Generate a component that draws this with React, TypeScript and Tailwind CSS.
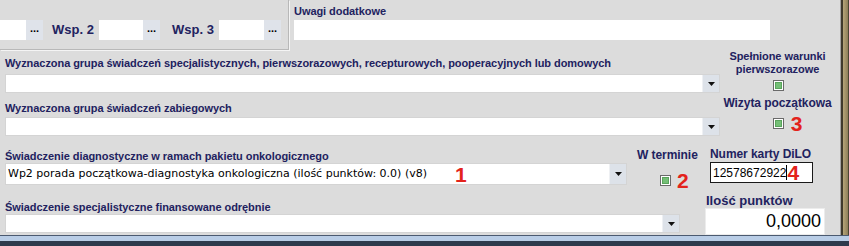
import React from 'react';

const lbl = "font-['Liberation_Sans',Arial,sans-serif] font-bold text-[11px] leading-[13px] text-[#22225f] tracking-[-0.06px] whitespace-nowrap";

function Arrow() {
  return (
    <svg width="7" height="4" viewBox="0 0 7 4">
      <path d="M0 0H7L3.5 4Z" fill="#111" />
    </svg>
  );
}

function Combo({ width, height = 19, text }: { width: number; height?: number; text?: string }) {
  return (
    <div
      className="flex bg-white border border-[#d4d4d4]"
      style={{ width, height }}
    >
      <div className="flex-1 flex items-center pl-[2px] font-['DejaVu_Sans',sans-serif] text-[11px] text-black whitespace-nowrap overflow-hidden">
        {text}
      </div>
      <div className="w-[17px] flex items-center justify-center bg-[#dde2e9] border-l border-[#eef0f3]">
        <Arrow />
      </div>
    </div>
  );
}

function DotsInput({ width }: { width: number }) {
  return (
    <div className="flex h-[20px] bg-white" style={{ width }}>
      <div className="flex-1" />
      <div className="w-[17px] flex items-center justify-center bg-[#dfe3ea] font-['Liberation_Sans',Arial,sans-serif] font-bold text-[11px] leading-none pb-[2px] text-black">
        ...
      </div>
    </div>
  );
}

function Check() {
  return (
    <div className="w-[11px] h-[11px] border border-[#6a6a6a] bg-white p-[1px]">
      <div className="w-full h-full bg-[#74bf76] border border-[#5aa35c]" />
    </div>
  );
}

function Num({ n }: { n: string }) {
  return (
    <span className="font-['Liberation_Sans',Arial,sans-serif] font-bold text-[21px] leading-none text-[#e3231b]">
      {n}
    </span>
  );
}

export default function App() {
  return (
    <div className="w-[849px] h-[246px] bg-[#dcdcdc] flex flex-col overflow-hidden">
      <div className="flex h-[235px]">
        <div className="w-[840px] flex flex-col">
          {/* top row */}
          <div className="flex h-[50px]">
            <div className="w-[289px] h-[50px] border-r border-b border-[#b8b8b8] shadow-[1px_1px_0_#f4f4f4] flex items-center pt-[10px]">
              <DotsInput width={43} />
              <span className={`${lbl} text-[13px] ml-[9px] w-[47px] tracking-normal`}>Wsp. 2</span>
              <DotsInput width={61} />
              <span className={`${lbl} text-[13px] ml-[12px] w-[47px] tracking-normal`}>Wsp. 3</span>
              <DotsInput width={62} />
            </div>
            <div className="ml-[5px] pt-[5px] flex flex-col">
              <span className={`${lbl} tracking-[-0.3px]`}>Uwagi dodatkowe</span>
              <div className="mt-[2px] w-[476px] h-[20px] bg-white" />
            </div>
          </div>

          {/* row 1 */}
          <div className="flex h-[45px]">
            <div className="ml-[5px] w-[720px] pt-[7px] flex flex-col">
              <span className={lbl}>
                Wyznaczona grupa świadczeń specjalistycznych, pierwszorazowych, recepturowych, pooperacyjnych lub domowych
              </span>
              <div className="mt-[4px]">
                <Combo width={715} />
              </div>
            </div>
            <div className="w-[105px] flex flex-col items-center">
              <span className={`${lbl} leading-[12px]`}>Spełnione warunki</span>
              <span className={`${lbl} leading-[12px]`}>pierwszorazowe</span>
              <div className="mt-[4px] ml-[1px]">
                <Check />
              </div>
            </div>
          </div>

          {/* row 2 */}
          <div className="flex h-[45px]">
            <div className="ml-[5px] w-[720px] pt-[7px] flex flex-col">
              <span className={lbl}>Wyznaczona grupa świadczeń zabiegowych</span>
              <div className="mt-[2px]">
                <Combo width={715} />
              </div>
            </div>
            <div className="w-[105px] flex flex-col items-center pt-[2px]">
              <span className={`${lbl} text-[12px] leading-[12px]`}>Wizyta początkowa</span>
              <div className="mt-[3px] ml-[20px] flex items-center gap-[7px]">
                <Check />
                <Num n="3" />
              </div>
            </div>
          </div>

          {/* row 3 */}
          <div className="flex h-[50px]">
            <div className="ml-[5px] w-[632px] pt-[10px] flex flex-col">
              <span className={lbl}>Świadczenie diagnostyczne w ramach pakietu onkologicznego</span>
              <div className="relative">
                <Combo
                  width={622}
                  height={22}
                  text="Wp2 porada początkowa-diagnostyka onkologiczna (ilość punktów: 0.0) (v8)"
                />
                <span className="absolute left-[450px] top-[1px]">
                  <Num n="1" />
                </span>
              </div>
            </div>
            <div className="w-[73px] pt-[9px] flex flex-col">
              <span className={`${lbl} text-[12px]`}>W terminie</span>
              <div className="mt-[8px] ml-[23px] flex items-center gap-[6px]">
                <Check />
                <Num n="2" />
              </div>
            </div>
            <div className="pt-[8px] flex flex-col">
              <span className={`${lbl} text-[12px]`}>Numer karty DiLO</span>
              <div className="mt-[1px] w-[103px] h-[21px] bg-white border border-[#1a1a1a] flex items-center pl-[2px] font-['Liberation_Sans',Arial,sans-serif] text-[12px] text-black">
                <span>12578672922</span>
                <span className="w-px h-[15px] bg-black" />
                <Num n="4" />
              </div>
            </div>
          </div>

          {/* row 4 */}
          <div className="flex h-[45px]">
            <div className="ml-[5px] w-[700px] pt-[11px] flex flex-col">
              <span className={lbl}>Świadczenie specjalistyczne finansowane odrębnie</span>
              <div>
                <Combo width={675} />
              </div>
            </div>
            <div className="pt-[4px] flex flex-col">
              <span className={`${lbl} text-[13px] leading-[14px] tracking-normal ml-[1px]`}>Ilość punktów</span>
              <div className="w-[120px] h-[27px] bg-white border border-[#ececec] flex items-center justify-end pr-[3px] font-['Liberation_Sans',Arial,sans-serif] text-[18px] text-black">
                0,0000
              </div>
            </div>
          </div>
        </div>

        {/* right window frame */}
        <div className="flex-1 flex">
          <div className="w-px bg-[#a3a3a3]" />
          <div className="w-[2px] bg-[#3f3a2c]" />
          <div className="flex-1 bg-gradient-to-r from-[#b6a57a] to-[#8d7f58]" />
          <div className="w-px bg-[#4a4534]" />
        </div>
      </div>

      {/* bottom window frame */}
      <div className="flex-1 flex flex-col">
        <div className="h-px bg-[#4b5a70]" />
        <div className="h-[5px] bg-[#b9cde6]" />
        <div className="flex-1 bg-[#2e3a4c]" />
      </div>
    </div>
  );
}
